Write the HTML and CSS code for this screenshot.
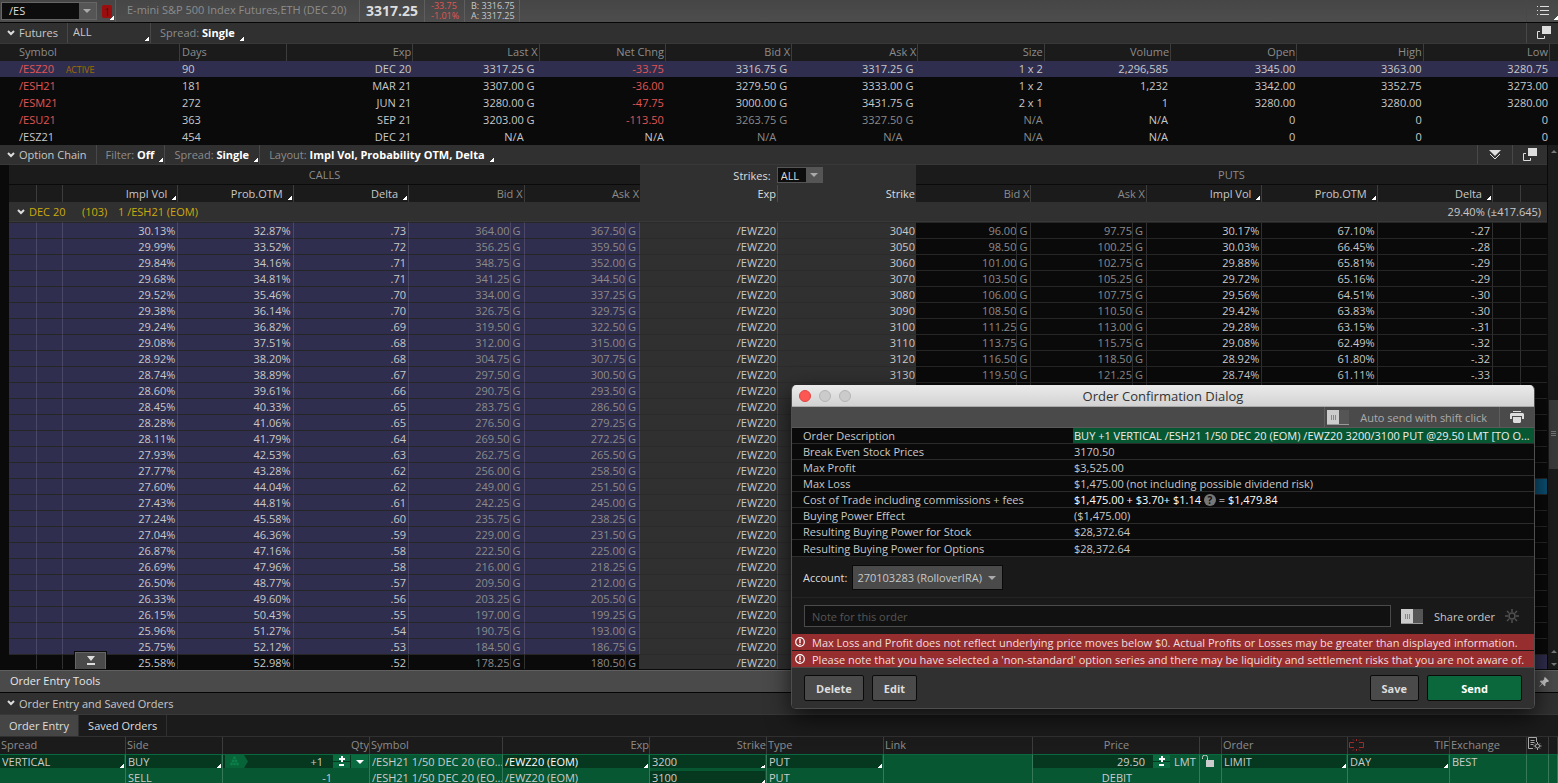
FILE: index.html
```html
<!DOCTYPE html>
<html lang="en">
<head>
    <meta charset="UTF-8">
    <meta name="viewport" content="width=device-width, initial-scale=1.0">
    <title>/ES - Trade</title>
    <link rel="stylesheet" href="styles.css">
</head>
<body>
    <header class="topbar">
        <div class="symbol-box">
            <input type="text" value="/ES" aria-label="Symbol">
            <button type="button" class="arrow-btn" aria-label="Symbol list"></button>
        </div>
        <button type="button" class="link-color ear"><span>1</span></button>
        <div class="instrument">E-mini S&amp;P 500 Index Futures,ETH (DEC 20)</div>
        <div class="last-price">3317.25</div>
        <div class="small-quote down"><div>-33.75</div><div>-1.01%</div></div>
        <div class="small-quote bid-ask"><div>B: 3316.75</div><div>A: 3317.25</div></div>
        <button type="button" class="bar-icon ear menu-icon" aria-label="Menu">
            <svg width="12" height="10" viewBox="0 0 12 10" fill="#ddd"><path d="M0 0h1v1H0zM3 0h9v1H3zM0 4h1v1H0zM3 4h9v1H3zM0 8h1v1H0zM3 8h9v1H3z"/></svg>
        </button>
    </header>

    <section class="futures">
        <div class="section-bar">
            <button type="button" class="section-title"><svg class="chevron" width="8" height="6" viewBox="0 0 8 6"><path d="M1 1l3 3 3-3"/></svg>Futures</button>
            <div class="menu ear futures-filter">
                <select aria-label="Futures filter"><option>ALL</option></select>
            </div>
            <button type="button" class="menu ear">Spread: <b>Single</b></button>
            <button type="button" class="bar-icon" aria-label="Detach futures">
                <svg class="detach" width="14" height="14" viewBox="0 0 14 14"><path class="front" d="M5 0h9v8H5z"/><path class="back" d="M3 5.500H.5v7h7V10"/></svg>
            </button>
        </div>
        <table class="futures-table">
            <colgroup><col class="c-symbol"><col class="c-days"><col span="10"><col class="c-end"></colgroup>
            <thead>
                <tr><th>Symbol</th><th>Days</th><th>Exp</th><th>Last X</th><th>Net Chng</th><th>Bid X</th><th>Ask X</th><th>Size</th><th>Volume</th><th>Open</th><th>High</th><th>Low</th><th></th></tr>
            </thead>
            <tbody>
                <tr class="selected"><td class="down">/ESZ20 <span class="active-tag">ACTIVE</span></td><td>90</td><td>DEC 20</td><td class="px">3317.25 G</td><td class="down">-33.75</td><td class="px">3316.75 G</td><td class="px">3317.25 G</td><td>1 x 2</td><td class="vol">2,296,585</td><td>3345.00</td><td>3363.00</td><td>3280.75</td><td></td></tr>
                <tr><td class="down">/ESH21</td><td>181</td><td>MAR 21</td><td class="px">3307.00 G</td><td class="down">-36.00</td><td class="px">3279.50 G</td><td class="px">3333.00 G</td><td>1 x 2</td><td class="vol">1,232</td><td>3342.00</td><td>3352.75</td><td>3273.00</td><td></td></tr>
                <tr><td class="down">/ESM21</td><td>272</td><td>JUN 21</td><td class="px">3280.00 G</td><td class="down">-47.75</td><td class="px">3000.00 G</td><td class="px">3431.75 G</td><td>2 x 1</td><td class="vol">1</td><td>3280.00</td><td>3280.00</td><td>3280.00</td><td></td></tr>
                <tr><td class="down">/ESU21</td><td>363</td><td>SEP 21</td><td class="px">3203.00 G</td><td class="down">-113.50</td><td class="px dim">3263.75 G</td><td class="px dim">3327.50 G</td><td class="dim">N/A</td><td class="vol">N/A</td><td>0</td><td>0</td><td>0</td><td></td></tr>
                <tr><td>/ESZ21</td><td>454</td><td>DEC 21</td><td class="px na">N/A</td><td>N/A</td><td class="px na dim">N/A</td><td class="px na dim">N/A</td><td class="dim">N/A</td><td class="vol">N/A</td><td>0</td><td>0</td><td>0</td><td></td></tr>
            </tbody>
        </table>
    </section>

    <section class="chain">
        <div class="chain-main">
            <div class="section-bar">
                <button type="button" class="section-title"><svg class="chevron" width="8" height="6" viewBox="0 0 8 6"><path d="M1 1l3 3 3-3"/></svg>Option Chain</button>
                <button type="button" class="menu ear">Filter: <b>Off</b></button>
                <button type="button" class="menu ear">Spread: <b>Single</b></button>
                <button type="button" class="menu ear">Layout: <b>Impl Vol, Probability OTM, Delta</b></button>
                <button type="button" class="bar-icon" aria-label="Expand all">
                    <svg width="12" height="10" viewBox="0 0 12 10"><path d="M0 0h12L6 6z" fill="#ddd"/><path d="M1 4l5 5 5-5" fill="none" stroke="#ddd"/></svg>
                </button>
                <button type="button" class="bar-icon" aria-label="Detach option chain">
                    <svg class="detach" width="14" height="14" viewBox="0 0 14 14"><path class="front" d="M5 0h9v8H5z"/><path class="back" d="M3 5.500H.5v7h7V10"/></svg>
                </button>
            </div>
            <table class="chain-table">
                <colgroup>
                    <col class="c-28"><col class="c-26"><col class="c-greek"><col class="c-greek"><col class="c-greek"><col class="c-price"><col class="c-x"><col class="c-price"><col class="c-x">
                    <col><col>
                    <col class="c-price"><col class="c-x"><col class="c-price"><col class="c-x"><col class="c-greek"><col class="c-greek"><col class="c-greek"><col class="c-28"><col class="c-26">
                </colgroup>
                <thead>
                    <tr class="sides">
                        <th colspan="9">CALLS</th>
                        <th colspan="2" class="mid"><div class="strikes"><label for="strikes">Strikes:</label><span class="strikes-select"><select id="strikes"><option>ALL</option></select></span></div></th>
                        <th colspan="9">PUTS</th>
                    </tr>
                    <tr class="heads">
                        <th></th><th></th><th class="ear">Impl Vol</th><th class="ear">Prob.OTM</th><th class="ear">Delta</th><th colspan="2">Bid X</th><th colspan="2" class="last">Ask X</th>
                        <th class="mid">Exp</th><th class="mid last">Strike</th>
                        <th colspan="2">Bid X</th><th colspan="2">Ask X</th><th class="ear">Impl Vol</th><th class="ear">Prob.OTM</th><th class="ear">Delta</th><th></th><th class="last"></th>
                    </tr>
                    <tr class="series">
                        <td colspan="20"><div class="series-line"><svg class="chevron" width="8" height="6" viewBox="0 0 8 6"><path d="M1 1l3 3 3-3"/></svg><span class="s-exp">DEC 20</span><span class="s-days">(103)</span><span>1 /ESH21 (EOM)</span><span class="s-vol">29.40% (±417.645)</span></div></td>
                    </tr>
                </thead>
                <tbody id="chainRows"></tbody>
            </table>
            <button type="button" class="collapse-tab" aria-label="Collapse">
                <svg width="10" height="10" viewBox="0 0 10 10" fill="#ddd"><path d="M1 0h8L5 5zM1 7h8v2H1z"/></svg>
            </button>
        </div>
        <div class="scrollbar">
            <i class="up"></i>
            <div class="track-above"></div>
            <div class="thumb"></div>
            <div class="track-below"></div>
            <i class="up"></i><i class="dn"></i>
        </div>
    </section>

    <section class="dock">
        <div class="dock-bar">Order Entry Tools
            <button type="button" class="pin" aria-label="Pin"><svg width="10" height="10" viewBox="0 0 10 10"><path d="M6 0l4 4-1 1-1-.3L6.300 6.500l.2 2L5.500 9.300 3.400 7.100.5 9.800l-.3-.3L2.900 6.600.8 4.500l1-.9 1.900.2L5.400 2 5 1z" fill="#ccc"/></svg></button>
        </div>
        <div class="section-bar">
            <button type="button" class="section-title"><svg class="chevron" width="8" height="6" viewBox="0 0 8 6"><path d="M1 1l3 3 3-3"/></svg>Order Entry and Saved Orders</button>
        </div>
        <nav class="tabs">
            <button type="button" class="current">Order Entry</button>
            <button type="button">Saved Orders</button>
        </nav>
        <table class="order-table">
            <colgroup><col class="o-spread"><col class="o-side"><col class="o-qty"><col class="o-symbol"><col class="o-qty"><col class="o-strike"><col class="o-strike"><col><col class="o-price"><col class="o-icon"><col class="o-side2"><col class="o-tif"><col class="o-exch"><col class="o-icon"><col class="o-end"></colgroup>
            <thead>
                <tr>
                    <th>Spread</th><th>Side</th><th class="r">Qty</th><th>Symbol</th><th class="r">Exp</th><th class="r">Strike</th><th>Type</th><th>Link</th><th class="c">Price</th><th></th><th>Order</th>
                    <th><div class="tif"><svg width="15" height="12" viewBox="0 0 15 12" fill="none" stroke="#a02c2c"><path d="M5 3.500H.5v5H5M10 3.500h4.500v5H10M7.500 0v2M7.500 10v2M4 .5l1 1M11 .5l-1 1M4 11.500l1-1M11 11.500l-1-1"/></svg><span>TIF</span></div></th>
                    <th>Exchange</th>
                    <th><svg width="14" height="13" viewBox="0 0 14 13" fill="none" stroke="#aaa"><path d="M5 11.500H.5V.5h8V5M2.500 3.500h4M2.500 5.500h4M2.500 7.500h3"/><circle cx="9.500" cy="9" r="2"/><path d="M9.500 5v2M9.500 11v2M5.500 9h2M11.500 9h2M7 6.500l1 1M12 6.500l-1 1M7 11.500l1-1M12 11.500l-1-1"/></svg></th>
                    <th></th>
                </tr>
            </thead>
            <tbody>
                <tr class="first">
                    <td><div class="field ear"><select aria-label="Spread"><option>VERTICAL</option></select></div></td>
                    <td><div class="field ear"><select aria-label="Side"><option>BUY</option></select></div></td>
                    <td><div class="field qty"><svg width="23" height="13" viewBox="0 0 23 13"><path d="M0 0h19l4 6.500-4 6.500H0z" fill="#076338"/><g fill="#0b8049"><circle cx="9.500" cy="3" r="1.400"/><circle cx="8" cy="6" r="1.400"/><circle cx="11" cy="6" r="1.400"/><circle cx="6.500" cy="9" r="1.400"/><circle cx="9.500" cy="9" r="1.400"/><circle cx="12.500" cy="9" r="1.400"/></g></svg><input type="text" value="+1" aria-label="Quantity"><button type="button" class="stepper" aria-label="Change quantity"></button><button type="button" class="drop" aria-label="Quantity list"></button></div></td>
                    <td>/ESH21 1/50 DEC 20 (EO...</td>
                    <td><div class="field ear bright"><select aria-label="Expiration"><option>/EWZ20 (EOM)</option></select></div></td>
                    <td><div class="field ear"><select aria-label="Strike"><option>3200</option></select></div></td>
                    <td><div class="field ear"><select aria-label="Type"><option>PUT</option></select></div></td>
                    <td></td>
                    <td><div class="price"><div class="field"><input type="text" value="29.50" aria-label="Price"><button type="button" class="stepper" aria-label="Change price"></button></div><span>LMT</span></div></td>
                    <td><svg width="13" height="12" viewBox="0 0 13 12"><path d="M4 5h8v7H4z" fill="#ccc"/><path d="M.5 4V2.500a2 2 0 0 1 5 0V5" fill="none" stroke="#ccc"/></svg></td>
                    <td><div class="field ear"><select aria-label="Order"><option>LIMIT</option></select></div></td>
                    <td><div class="field ear"><select aria-label="Time in force"><option>DAY</option></select></div></td>
                    <td>BEST</td><td></td><td></td>
                </tr>
                <tr>
                    <td></td><td>SELL</td><td class="r qty2">-1</td><td>/ESH21 1/50 DEC 20 (EO...</td><td>/EWZ20 (EOM)</td>
                    <td><div class="field ear"><select aria-label="Second strike"><option>3100</option></select></div></td>
                    <td>PUT</td><td></td><td class="c">DEBIT</td><td></td><td></td><td></td><td></td><td></td><td></td>
                </tr>
            </tbody>
        </table>
    </section>

    <div class="dialog" role="dialog" aria-labelledby="dialogTitle">
        <div class="titlebar">
            <button type="button" class="light close" aria-label="Close"></button><i class="light"></i><i class="light"></i>
            <h1 id="dialogTitle">Order Confirmation Dialog</h1>
        </div>
        <div class="toolbar">
            <label class="auto-send"><input type="checkbox" class="toggle">Auto send with shift click</label>
            <button type="button" class="print" aria-label="Print">
                <svg width="14" height="12" viewBox="0 0 14 12" fill="#ddd"><path d="M3 0h8v1H3zM0 3l1-1h12l1 1v5h-2V5H2v3H0zM3 6h8v5l-1 1H4l-1-1z"/></svg>
            </button>
        </div>
        <table class="details">
            <colgroup><col class="d-label"><col></colgroup>
            <tbody>
                <tr><th>Order Description</th><td class="description">BUY +1 VERTICAL /ESH21 1/50 DEC 20 (EOM) /EWZ20 3200/3100 PUT @29.50 LMT [TO O...</td></tr>
                <tr><th>Break Even Stock Prices</th><td>3170.50</td></tr>
                <tr><th>Max Profit</th><td>$3,525.00</td></tr>
                <tr><th>Max Loss</th><td>$1,475.00 (not including possible dividend risk)</td></tr>
                <tr><th>Cost of Trade including commissions + fees</th><td class="bright">$1,475.00 + $3.70+ $1.14 <span class="help">?</span> = $1,479.84</td></tr>
                <tr><th>Buying Power Effect</th><td>($1,475.00)</td></tr>
                <tr><th>Resulting Buying Power for Stock</th><td>$28,372.64</td></tr>
                <tr><th>Resulting Buying Power for Options</th><td>$28,372.64</td></tr>
            </tbody>
        </table>
        <div class="account">
            <label for="account">Account:</label>
            <span class="account-select"><select id="account"><option>270103283 (RolloverIRA)</option></select></span>
        </div>
        <div class="note">
            <input type="text" placeholder="Note for this order" aria-label="Note for this order">
            <label><input type="checkbox" class="toggle">Share order</label>
            <button type="button" class="gear" aria-label="Share settings">
                <svg width="14" height="14" viewBox="0 0 14 14" fill="none" stroke="#505050"><circle cx="7" cy="7" r="3" stroke-width="1.500"/><path stroke-width="1.500" d="M7 0v3M7 11v3M0 7h3M11 7h3M2 2l2 2M12 2l-2 2M2 12l2-2M12 12l-2-2"/></svg>
            </button>
        </div>
        <div class="warnings">
            <p><svg width="10" height="10" viewBox="0 0 10 10"><circle cx="5" cy="5" r="4.300" fill="none" stroke="#fff" stroke-width="1.200"/><path d="M4.300 2h1.400v4H4.300zM4.300 6.800h1.400v1.200H4.300z" fill="#fff"/></svg>Max Loss and Profit does not reflect underlying price moves below $0. Actual Profits or Losses may be greater than displayed information.</p>
            <p><svg width="10" height="10" viewBox="0 0 10 10"><circle cx="5" cy="5" r="4.300" fill="none" stroke="#fff" stroke-width="1.200"/><path d="M4.300 2h1.400v4H4.300zM4.300 6.800h1.400v1.200H4.300z" fill="#fff"/></svg>Please note that you have selected a 'non-standard' option series and there may be liquidity and settlement risks that you are not aware of.</p>
        </div>
        <div class="actions">
            <button type="button">Delete</button>
            <button type="button">Edit</button>
            <button type="button" class="save">Save</button>
            <button type="button" class="send">Send</button>
        </div>
    </div>
    <script src="script.js"></script>
</body>
</html>
```
FILE: styles.css
```css
* {
    box-sizing: border-box;
}
body {
    margin: 0;
    height: 100vh;
    overflow: hidden;
    display: flex;
    flex-direction: column;
    background: #0a0a0a;
    color: #c8c8c8;
    font-family: "Open Sans", "Noto Sans", sans-serif;
    font-size: 11px;
    line-height: 15px;
}
button, input, select {
    font: inherit;
    color: inherit;
    background: none;
    border: none;
    border-radius: 0;
    padding: 0;
    margin: 0;
    outline: none;
}
select {
    appearance: none;
}
svg {
    display: block;
    flex: none;
}
table {
    width: 100%;
    table-layout: fixed;
    border-spacing: 0;
}
th, td {
    padding: 0;
    font-weight: normal;
    white-space: nowrap;
    overflow: hidden;
}
b {
    color: #fff;
}
.down {
    color: #e05555;
}
.ear {
    position: relative;
}
.ear::after {
    content: "";
    position: absolute;
    right: 1px;
    bottom: 2px;
    width: 4px;
    height: 4px;
    background: linear-gradient(135deg, transparent 50%, #fff 50%);
    pointer-events: none;
}
.chevron {
    fill: none;
    stroke: #ddd;
    stroke-width: 2;
}

/* top bar */
.topbar {
    flex: none;
    display: flex;
    height: 23px;
    background: linear-gradient(#464646, #4d4d4d);
    border-bottom: 1px solid #050505;
}
.topbar > div + div,
.topbar > .instrument {
    border-left: 1px solid #5e5e5e;
}
.symbol-box {
    display: flex;
    width: 96px;
    height: 18px;
    margin: 2px 0 0 1px;
    border: 1px solid #666;
    background: #0d0d0d;
}
.symbol-box input {
    width: 77px;
    padding: 0 0 1px 7px;
    color: #ddd;
}
.arrow-btn {
    width: 17px;
    background: #555;
    position: relative;
}
.arrow-btn::after,
.strikes-select::after,
.account-select::after {
    content: "";
    position: absolute;
    right: 5px;
    top: 6px;
    border: 4px solid transparent;
    border-top-color: #aaa;
    border-bottom: none;
    pointer-events: none;
}
.link-color {
    width: 18px;
}
.link-color span {
    display: block;
    width: 10px;
    margin-left: 5px;
    border-radius: 2px;
    background: #9c0d0d;
    color: #4a1515;
    line-height: 13px;
}
.instrument {
    width: 244px;
    padding-left: 11px;
    line-height: 20px;
    color: #8c8c8c;
}
.last-price {
    width: 65px;
    padding-left: 6px;
    color: #ddd;
    font-size: 14px;
    font-weight: bold;
    line-height: 22px;
}
.small-quote {
    width: 40px;
    padding: 1px 0 0 6px;
    font-size: 9px;
    line-height: 10px;
    white-space: nowrap;
}
.bid-ask {
    width: 56px;
    border-right: 1px solid #5e5e5e;
}
.bar-icon {
    display: flex;
    align-items: center;
    justify-content: center;
    width: 35px;
    border-left: 1px solid #484848;
}
.menu-icon {
    width: 32px;
    margin-left: auto;
}
.menu-icon::after {
    right: 0;
}

/* section headers */
.section-bar {
    flex: none;
    display: flex;
    height: 20px;
    background: #303030;
    border-bottom: 1px solid #383838;
}
.futures .section-bar {
    height: 21px;
}
.section-title {
    display: flex;
    align-items: center;
    gap: 4px;
    padding: 0 9px 0 7px;
}
.menu {
    padding: 0 10px 0 9px;
    border-left: 1px solid #484848;
    color: #8c8c8c;
}
.futures button,
.dock .section-title {
    padding-bottom: 1px;
}
.futures-filter {
    width: 83px;
    padding: 1px 5px;
    color: #c8c8c8;
}
.futures-filter select {
    width: 70px;
}
.menu + .bar-icon {
    margin-left: auto;
}
.futures .bar-icon {
    width: 32px;
    padding-left: 3px;
}
.detach .front {
    fill: #ddd;
}
.detach .back {
    fill: none;
    stroke: #ddd;
}

/* futures list */
.futures {
    flex: none;
}
.c-symbol {
    width: 180px;
}
.c-days {
    width: 107px;
}
.c-end {
    width: 8px;
}
.futures-table th {
    height: 17px;
    padding: 0 1px;
    background: #1b1b1b;
    border-right: 1px solid #3c3c3c;
    color: #8c8c8c;
    text-align: right;
    vertical-align: top;
}
.futures-table td {
    height: 17px;
    padding-right: 2px;
    border-bottom: 1px solid #0a0a0a;
    text-align: right;
    vertical-align: top;
}
.futures-table tr:last-child td {
    height: 16px;
    border-bottom: none;
}
.futures-table th:first-child,
.futures-table td:first-child {
    padding-left: 19px;
    text-align: left;
}
.futures-table th:nth-child(2),
.futures-table td:nth-child(2) {
    padding-left: 2px;
    text-align: left;
}
.futures-table th:last-child {
    border-right: none;
}
.futures-table td.px {
    padding-right: 5px;
}
.futures-table td.na {
    padding-right: 16px;
}
.futures-table td.vol {
    padding-right: 3px;
}
.futures-table .dim {
    color: #8a8a8a;
}
.futures-table .selected td {
    background: #302e4e;
}
.active-tag {
    margin-left: 9px;
    color: #a06a00;
    font-family: "DejaVu Sans", sans-serif;
    font-size: 8px;
    line-height: 8px;
}

/* option chain */
.chain {
    flex: 1;
    min-height: 0;
    display: flex;
    overflow: hidden;
}
.chain-main {
    flex: 1;
    min-width: 0;
    position: relative;
    overflow: hidden;
}
.chain-table {
    width: calc(100% - 9px);
    margin-left: 9px;
}
.c-28 {
    width: 28px;
}
.c-26 {
    width: 26px;
}
.c-greek {
    width: 7.5%;
}
.c-price {
    width: 6.6%;
}
.c-x {
    width: 14px;
}
.chain-table th {
    background: #1b1b1b;
    color: #8c8c8c;
}
.sides th {
    height: 20px;
    border-bottom: 1px solid #0a0a0a;
}
.chain-table th.mid {
    background: #303030;
    border-bottom: none;
    color: #ddd;
}
.strikes {
    display: flex;
    justify-content: center;
    align-items: center;
    gap: 6px;
}
.strikes-select {
    position: relative;
    border: 1px solid #555;
    background: #0d0d0d;
}
.strikes-select select {
    display: block;
    width: 44px;
    height: 14px;
    padding-left: 3px;
    background: linear-gradient(90deg, transparent 28px, #555 28px);
}
.strikes-select::after {
    right: 4px;
    top: 5px;
}
.heads th {
    height: 17px;
    padding-right: 1px;
    border-right: 1px solid #3c3c3c;
    text-align: right;
}
.heads th.mid {
    border-color: #4a4a4a;
}
.heads th.last {
    border-right: none;
}
.heads th.ear {
    padding-right: 10px;
    color: #c8c8c8;
}
.series td {
    height: 20px;
    background: #303030;
    border-bottom: 1px solid #383838;
}
.series-line {
    display: flex;
    align-items: center;
    padding: 0 6px 0 8px;
    color: #ccaa0c;
}
.s-exp {
    width: 53px;
    margin-left: 4px;
}
.s-days {
    width: 36px;
}
.s-vol {
    margin-left: auto;
    color: #c8c8c8;
}
.chain-table tbody td {
    height: 16px;
    padding-right: 2px;
    border-top: 1px solid #262626;
    border-right: 1px solid #303030;
    text-align: right;
}
.chain-table tbody td.quote {
    padding-right: 0;
    color: #8a8a8a;
}
.chain-table tbody td.exchange {
    padding-right: 3px;
}
.chain-table tbody td.mid {
    background: #303030;
    border-top-color: #2b2b2b;
    border-right-color: #4a4a4a;
    padding-right: 1px;
}
.chain-table tbody td.last {
    border-right: none;
}
.chain-table tbody td.itm {
    background: #302e4e;
    border-right-color: #4a4866;
}
.chain-table tbody td.order-leg {
    background: #0b5074;
}
.collapse-tab {
    position: absolute;
    left: 75px;
    bottom: 0;
    width: 31px;
    height: 17px;
    padding-left: 10px;
    background: #4a4a4a;
    border: 1px solid #666;
    border-bottom: none;
    box-shadow: 0 0 0 1px #0a0a0a;
}
.scrollbar {
    width: 11px;
    display: flex;
    flex-direction: column;
    align-items: center;
    padding: 3px 0 3px 1px;
    background: #1b1b1b;
    border-left: 1px solid #0a0a0a;
}
.scrollbar i {
    margin: 2px 0 8px;
    border: 3px solid transparent;
}
.scrollbar .up {
    border-bottom-color: #777;
    border-top: none;
}
.scrollbar .dn {
    border-top-color: #777;
    border-bottom: none;
    margin-bottom: 0;
}
.track-above {
    flex: 4;
}
.track-below {
    flex: 3;
}
.thumb {
    width: 100%;
    height: 69px;
    background: linear-gradient(#777, #777) center 31px / 5px 1px no-repeat,
        linear-gradient(#777, #777) center 33px / 5px 1px no-repeat,
        linear-gradient(#777, #777) center 35px / 5px 1px no-repeat,
        #3a3a3a;
}

/* order entry dock */
.dock {
    flex: none;
    height: 114px;
    overflow: hidden;
    border-top: 1px solid #0a0a0a;
}
.dock-bar {
    display: flex;
    justify-content: space-between;
    height: 23px;
    padding: 0 9px 0 10px;
    background: #4a4a4a;
    border-top: 1px solid #606060;
    border-bottom: 1px solid #050505;
    color: #e6e6e6;
    line-height: 19px;
}
.dock .section-bar {
    height: 22px;
}
.tabs {
    display: flex;
    height: 22px;
    background: #1b1b1b;
    border-bottom: 1px solid #303030;
}
.tabs button {
    padding: 0 9px 1px;
    border-right: 1px solid #303030;
    color: #ddd;
}
.tabs .current {
    background: #454545;
}
.o-spread {
    width: 126px;
}
.o-side {
    width: 97px;
}
.o-qty {
    width: 147px;
}
.o-symbol {
    width: 133px;
}
.o-strike {
    width: 117px;
}
.o-price {
    width: 167px;
}
.o-icon {
    width: 22px;
}
.o-side2 {
    width: 126px;
}
.o-tif {
    width: 102px;
}
.o-exch {
    width: 77px;
}
.o-end {
    width: 9px;
}
.order-table th,
.order-table td {
    vertical-align: top;
}
.order-table th {
    height: 17px;
    padding-left: 1px;
    background: #1b1b1b;
    border-right: 1px solid #3c3c3c;
    color: #8c8c8c;
    text-align: left;
}
.order-table td {
    height: 17px;
    padding-left: 2px;
    background: #075733;
    border-right: 1px solid #35785a;
    color: #ccc;
    line-height: 13px;
}
.order-table .first td {
    border-top: 1px solid #0a6840;
}
.order-table .r {
    text-align: right;
}
.order-table .c {
    text-align: center;
}
.order-table .qty2 {
    padding-right: 37px;
}
.tif {
    display: flex;
    align-items: center;
    justify-content: space-between;
}
.field {
    display: flex;
    height: 13px;
    margin: 0 1px 3px -2px;
    background: #06371f;
}
.field.ear::after {
    right: 0;
    bottom: 0;
}
.field select {
    width: 100%;
    padding-left: 2px;
}
.field input {
    flex: 1;
    min-width: 0;
    padding-right: 7px;
    text-align: right;
}
.bright {
    color: #fff;
}
.qty input {
    padding-right: 9px;
}
.qty svg {
    margin-left: 2px;
}
.stepper, .drop {
    width: 17px;
    background: #0a6b40;
    margin-left: 1px;
}
.stepper {
    background: linear-gradient(#fff, #fff) center 3px / 6px 2px no-repeat,
        linear-gradient(#fff, #fff) center 1px / 2px 6px no-repeat,
        linear-gradient(#fff, #fff) center 9px / 5px 2px no-repeat,
        linear-gradient(#0a6b40 6px, #06371f 6px, #06371f 7px, #0a6b40 7px);
}
.drop::after {
    content: "";
    display: block;
    width: 0;
    margin: 0 auto;
    border: 4px solid transparent;
    border-top-color: #fff;
    border-bottom: none;
}
.price {
    display: flex;
    gap: 3px;
}
.price .field {
    width: 137px;
}

/* order confirmation */
.dialog {
    position: absolute;
    right: 23px;
    bottom: 74px;
    width: 744px;
    border: 1px solid #4e4e4e;
    border-top: none;
    border-radius: 5px;
    background: #191919;
    box-shadow: 0 8px 24px rgba(0, 0, 0, 0.7);
    overflow: hidden;
}
.titlebar {
    display: flex;
    align-items: center;
    gap: 8px;
    height: 22px;
    padding-left: 7px;
    background: linear-gradient(#ebebeb, #d2d2d2);
    border-bottom: 1px solid #aaa;
}
.titlebar h1 {
    flex: 1;
    margin: 2px 67px 0 0;
    color: #333;
    font-size: 13px;
    font-weight: normal;
    text-align: center;
}
.light {
    width: 12px;
    height: 12px;
    border: 1px solid #b4b4b4;
    border-radius: 50%;
    background: #cbcbcb;
}
.close {
    background: #fc5753;
    border-color: #e0443e;
}
.toolbar {
    display: flex;
    justify-content: flex-end;
    height: 21px;
    background: #4a4a4a;
    border-bottom: 1px solid #5a5a5a;
    color: #aaa;
}
.auto-send {
    padding: 0 12px 0 2px;
    border-left: 1px solid #5e5e5e;
}
.auto-send, .note label {
    display: flex;
    align-items: center;
    gap: 11px;
}
.toggle {
    appearance: none;
    width: 22px;
    height: 15px;
    border-bottom: 1px solid #999;
    background: linear-gradient(90deg, transparent 4px, #888 4px, #888 5px, transparent 5px, transparent 6px, #888 6px, #888 7px, transparent 7px, transparent 8px, #888 8px, #888 9px, transparent 9px) 0 5px / 12px 5px no-repeat,
        linear-gradient(90deg, #ccc 12px, #555 12px);
}
.print {
    width: 35px;
    padding-left: 10px;
    border-left: 1px solid #5e5e5e;
}
.d-label {
    width: 281px;
}
.details th, .details td {
    height: 16px;
    background: #0a0a0a;
    border-bottom: 1px solid #2c2c2c;
    text-align: left;
}
.details tr:last-child > * {
    height: 17px;
}
.details th {
    padding-left: 11px;
}
.details td {
    padding-left: 1px;
}
.details .description {
    background: #075733;
    color: #eee;
}
.help {
    display: inline-block;
    width: 12px;
    height: 12px;
    border-radius: 50%;
    background: #777;
    color: #111;
    font-size: 10px;
    font-weight: bold;
    line-height: 12px;
    text-align: center;
}
.account {
    display: flex;
    align-items: center;
    gap: 5px;
    height: 41px;
    padding-left: 11px;
    border-bottom: 1px solid #242424;
    color: #ddd;
}
.account-select {
    position: relative;
    border: 1px solid #0a0a0a;
}
.account-select select {
    display: block;
    width: 149px;
    height: 23px;
    padding-left: 4px;
    background: #4a4a4a;
    color: #c8c8c8;
}
.account-select::after {
    right: 6px;
    top: 10px;
}
.note {
    display: flex;
    align-items: center;
    gap: 10px;
    height: 36px;
    padding: 0 15px 0 12px;
}
.note input[type="text"] {
    flex: 1;
    height: 22px;
    padding-left: 7px;
    border: 1px solid #4a4a4a;
    background: #111;
}
.note input::placeholder {
    color: #555;
}
.warnings {
    display: grid;
    gap: 1px;
}
.warnings p {
    display: flex;
    align-items: center;
    gap: 7px;
    height: 16px;
    margin: 0;
    padding-left: 3px;
    background: #962d2f;
    color: #f0dede;
    white-space: nowrap;
}
.actions {
    display: flex;
    gap: 8px;
    height: 41px;
    padding: 7px 12px;
    background: #303030;
    border-top: 1px solid #484848;
}
.actions button {
    height: 26px;
    padding: 0 11px;
    border: 1px solid #0a0a0a;
    border-radius: 2px;
    background: #4a4a4a;
    color: #ddd;
    font-weight: bold;
}
.actions .save {
    margin-left: auto;
}
.actions .send {
    width: 95px;
    background: #0a683c;
    color: #fff;
}
```
FILE: script.js
```js
// impl vol, prob OTM, delta, bid, ask
const calls = [
    ["30.13%", "32.87%", ".73", "364.00", "367.50"],
    ["29.99%", "33.52%", ".72", "356.25", "359.50"],
    ["29.84%", "34.16%", ".71", "348.75", "352.00"],
    ["29.68%", "34.81%", ".71", "341.25", "344.50"],
    ["29.52%", "35.46%", ".70", "334.00", "337.25"],
    ["29.38%", "36.14%", ".70", "326.75", "329.75"],
    ["29.24%", "36.82%", ".69", "319.50", "322.50"],
    ["29.08%", "37.51%", ".68", "312.00", "315.00"],
    ["28.92%", "38.20%", ".68", "304.75", "307.75"],
    ["28.74%", "38.89%", ".67", "297.50", "300.50"],
    ["28.60%", "39.61%", ".66", "290.75", "293.50"],
    ["28.45%", "40.33%", ".65", "283.75", "286.50"],
    ["28.28%", "41.06%", ".65", "276.50", "279.25"],
    ["28.11%", "41.79%", ".64", "269.50", "272.25"],
    ["27.93%", "42.53%", ".63", "262.75", "265.50"],
    ["27.77%", "43.28%", ".62", "256.00", "258.50"],
    ["27.60%", "44.04%", ".62", "249.00", "251.50"],
    ["27.43%", "44.81%", ".61", "242.25", "245.00"],
    ["27.24%", "45.58%", ".60", "235.75", "238.25"],
    ["27.04%", "46.36%", ".59", "229.00", "231.50"],
    ["26.87%", "47.16%", ".58", "222.50", "225.00"],
    ["26.69%", "47.96%", ".58", "216.00", "218.25"],
    ["26.50%", "48.77%", ".57", "209.50", "212.00"],
    ["26.33%", "49.60%", ".56", "203.25", "205.50"],
    ["26.15%", "50.43%", ".55", "197.00", "199.25"],
    ["25.96%", "51.27%", ".54", "190.75", "193.00"],
    ["25.75%", "52.12%", ".53", "184.50", "186.75"],
    ["25.58%", "52.98%", ".52", "178.25", "180.50"]
];

// strike, bid, ask, impl vol, prob OTM, delta
const puts = [
    ["3040", "96.00", "97.75", "30.17%", "67.10%", "-.27"],
    ["3050", "98.50", "100.25", "30.03%", "66.45%", "-.28"],
    ["3060", "101.00", "102.75", "29.88%", "65.81%", "-.29"],
    ["3070", "103.50", "105.25", "29.72%", "65.16%", "-.29"],
    ["3080", "106.00", "107.75", "29.56%", "64.51%", "-.30"],
    ["3090", "108.50", "110.50", "29.42%", "63.83%", "-.30"],
    ["3100", "111.25", "113.00", "29.28%", "63.15%", "-.31"],
    ["3110", "113.75", "115.75", "29.08%", "62.49%", "-.32"],
    ["3120", "116.50", "118.50", "28.92%", "61.80%", "-.32"],
    ["3130", "119.50", "121.25", "28.74%", "61.11%", "-.33"]
];

const orderRow = 16;
const firstOtmCall = 27;

function cell(text, className) {
    return `<td class="${className}">${text}</td>`;
}

function quote(price, className) {
    return cell(price, "quote " + className) + cell(price ? "G" : "", "quote exchange " + className);
}

document.getElementById("chainRows").innerHTML = calls.map((call, i) => {
    const put = puts[i] || ["", "", "", "", "", ""];
    const c = i < firstOtmCall ? "itm" : "";
    const p = i === orderRow ? "order-leg" : i >= firstOtmCall ? "itm" : "";
    return "<tr>" +
        cell("", c) + cell("", c) + cell(call[0], c) + cell(call[1], c) + cell(call[2], c) +
        quote(call[3], c) + quote(call[4], "last-pair " + c) +
        cell("/EWZ20", "mid") + cell(put[0], "mid last") +
        quote(put[1], p) + quote(put[2], p) +
        cell(put[3], p) + cell(put[4], p) + cell(put[5], p) + cell("", p) + cell("", "last " + p) +
        "</tr>";
}).join("");
```
